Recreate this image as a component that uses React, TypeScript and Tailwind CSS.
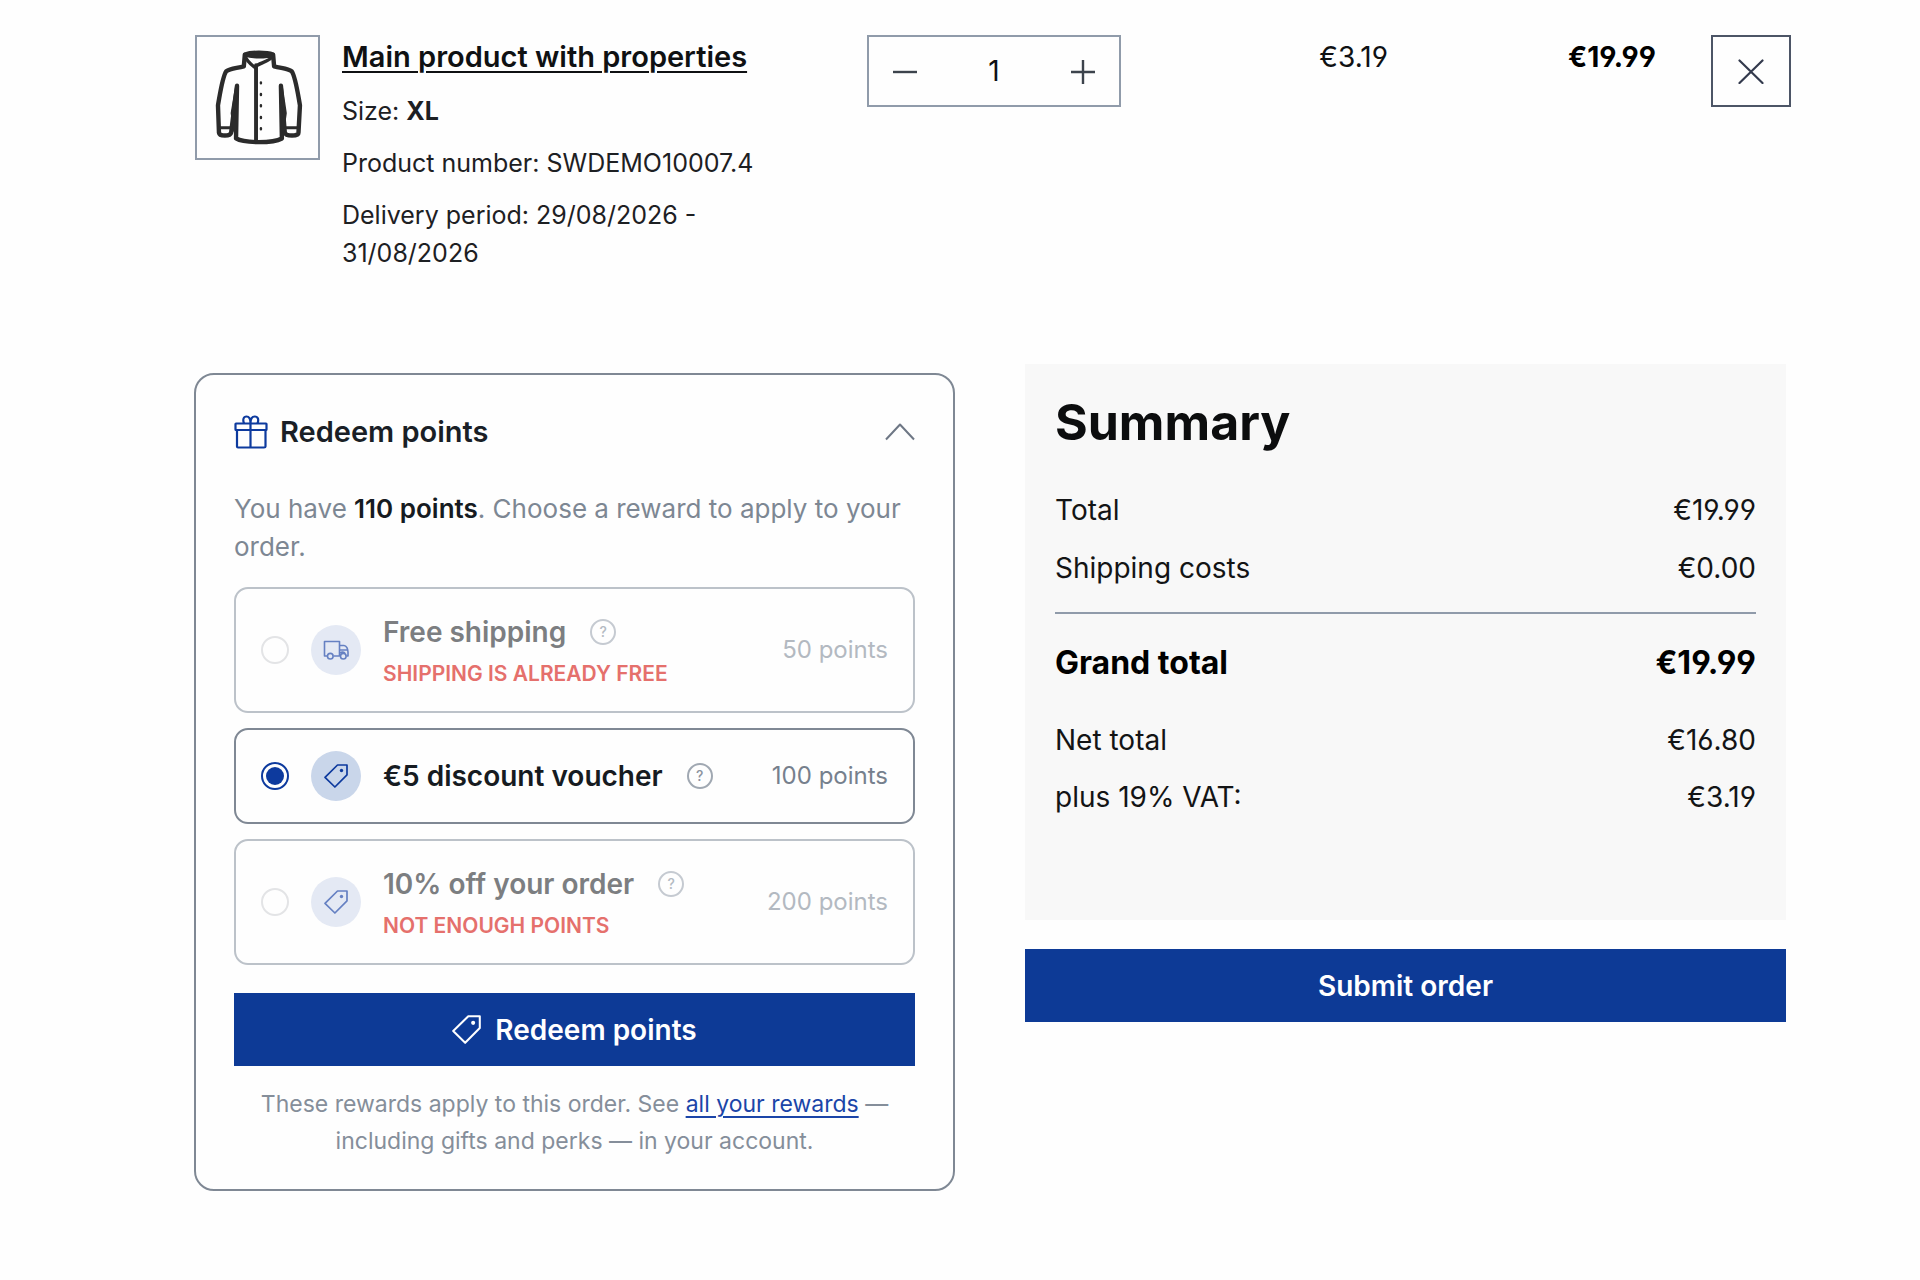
import { useState } from "react";

type Reward = {
  id: string;
  title: string;
  points: number;
  icon: "truck" | "tag";
  note?: string;
};

const REWARDS: Reward[] = [
  { id: "shipping", title: "Free shipping", points: 50, icon: "truck", note: "Shipping is already free" },
  { id: "voucher", title: "€5 discount voucher", points: 100, icon: "tag" },
  { id: "percent", title: "10% off your order", points: 200, icon: "tag", note: "Not enough points" },
];

function ShirtIcon() {
  return (
    <svg viewBox="0 0 124 124" className="size-full" fill="none" stroke="#2b2b2b" strokeWidth="4.5" strokeLinejoin="round" strokeLinecap="round" aria-hidden="true">
      <path d="M49 18 C56 15.500 71 15.500 78 18 L79 30 C86 32 93 32 97 35 C101 41 103 56 105.500 70 L104 98 C104 102 91 102 90 98 L86 50 L87 104 C78 109 48 109 40 104 L41 50 L35 98 C34 102 23 102 22.500 98 L21.500 70 C24 56 26 41 30 35 C34 32 41 32 48 30 Z" />
      <path d="M49 18 C56 21 71 21 78 18 M49 19 C51 25 55 28 59 31 C62 27 76 25 78 19" strokeWidth="3.500" />
      <path d="M60.500 29 V106" strokeWidth="4" />
      <path d="M23 93 H35 M91 93 H104" strokeWidth="3" />
      <path d="M41 51 L36.500 78 L39 96 M86 51 L90 78 L87.500 96" strokeWidth="4" />
      <path d="M65.500 46.500 V47.500 M65.500 58.500 V59.500 M65.500 70 V71 M65.500 82 V83 M65.500 93.500 V94.500" strokeWidth="2.500" />
    </svg>
  );
}

function GiftIcon() {
  return (
    <svg viewBox="0 0 34 34" className="size-[34px]" fill="none" stroke="#0d3a9e" strokeWidth="2.200" strokeLinejoin="round" aria-hidden="true">
      <rect x="1.500" y="8.500" width="31" height="6.500" rx="0.500" />
      <path d="M3 15 V31.500 Q3 32.500 4 32.500 H30 Q31.500 32.500 31.500 31.500 V15 M16.500 8.500 V32.500" />
      <path d="M10 8.500 C8.500 4.500 9.500 1.500 12.500 1.500 C15.500 1.500 16.500 4 16.500 8.500 M23.500 8.500 C25 4.500 24 1.500 20.800 1.500 C17.500 1.500 16.500 4 16.500 8.500" />
    </svg>
  );
}

function TagIcon({ className }: { className: string }) {
  return (
    <svg viewBox="0 0 24 24" className={className} fill="none" stroke="currentColor" strokeWidth="1.700" strokeLinejoin="round" aria-hidden="true">
      <path d="M13.500 1 H23 V10.800 L10.900 23 L1 13.300 Z" />
      <circle cx="17.500" cy="6.500" r="1.700" fill="currentColor" stroke="none" />
    </svg>
  );
}

function TruckIcon() {
  return (
    <svg viewBox="0 0 26 26" className="size-[26px]" fill="none" stroke="currentColor" strokeWidth="1.600" strokeLinejoin="round" aria-hidden="true">
      <path d="M4 19 H1.500 V4.500 H16.500 V19 H10.500" />
      <path d="M16.500 8.500 H21 C23.500 8.500 25 12 25 15 V19 H23.500 M17 13 H24.500 M17 16 C19 14.500 21 15 22 16.500" />
      <circle cx="7.300" cy="19.200" r="2.800" />
      <circle cx="20.300" cy="19.200" r="2.800" />
    </svg>
  );
}

function RewardOption({ reward, checked, onSelect }: { reward: Reward; checked: boolean; onSelect: () => void }) {
  const disabled = Boolean(reward.note);
  return (
    <div
      className={`flex items-center rounded-[14px] border-2 px-[25px] ${
        disabled ? "h-[126px] border-[#bcc2c9]" : "h-24 border-[#7f8894]"
      }`}
    >
      <input
        type="radio"
        id={reward.id}
        name="reward"
        checked={checked}
        disabled={disabled}
        onChange={onSelect}
        className="grid size-7 shrink-0 appearance-none place-items-center rounded-full border-2 border-[#0d3a9e] before:size-[18px] before:rounded-full checked:before:bg-[#0d3a9e] disabled:border-[#e3e4e6]"
      />
      <span
        className={`ml-[22px] grid size-[50px] shrink-0 place-items-center rounded-full ${
          disabled ? "bg-[#e4e9f4] text-[#6580c2]" : "bg-[#c9d6ea] text-[#0d3a9e]"
        }`}
      >
        {reward.icon === "truck" ? <TruckIcon /> : <TagIcon className="size-6" />}
      </span>
      <div className="ml-[22px] flex-1">
        <div className="flex items-center gap-6">
          <label htmlFor={reward.id} className={`text-[28px] leading-9 font-semibold ${disabled ? "text-[#7c7e81]" : "text-[#161b21]"}`}>
            {reward.title}
          </label>
          <button
            type="button"
            aria-label={`About ${reward.title}`}
            className={`grid size-[26px] place-items-center rounded-full border-2 text-[14px] leading-none font-medium ${
              disabled ? "border-[#c5cad1] text-[#b4bac2]" : "border-[#a0a8b2] text-[#8b939e]"
            }`}
          >
            ?
          </button>
        </div>
        {reward.note && <p className="mt-3 text-[21px] leading-6 font-semibold text-[#e5706c] uppercase">{reward.note}</p>}
      </div>
      <span className={`text-[24px] leading-9 ${disabled ? "text-[#b3b9c1]" : "text-[#76808d]"}`}>{reward.points} points</span>
    </div>
  );
}

function CartItem() {
  const [quantity, setQuantity] = useState(1);
  return (
    <section className="grid grid-cols-[672fr_254fr_267fr_268fr_135fr] items-start pl-px text-[28px] leading-[42px] text-[#0f1113]">
      <div className="flex gap-[22px]">
        <div className="size-[125px] shrink-0 border-2 border-[#909baa]">
          <ShirtIcon />
        </div>
        <div className="max-w-[420px] pt-px text-[25px] leading-[38px] text-[#1d2023]">
          <a href="#product" className="text-[29px] leading-[42px] font-semibold text-[#0f1113] underline decoration-2 underline-offset-4">
            Main product with properties
          </a>
          <p className="mt-[14px]">
            Size: <strong className="font-bold">XL</strong>
          </p>
          <p className="mt-[14px]">Product number: SWDEMO10007.4</p>
          <p className="mt-[14px]">Delivery period: 29/08/2026 - 31/08/2026</p>
        </div>
      </div>
      <div className="flex h-[72px] items-center border-2 border-[#909baa]">
        <button type="button" aria-label="Decrease quantity" onClick={() => setQuantity(Math.max(1, quantity - 1))} className="grid h-full w-[72px] shrink-0 place-items-center">
          <svg viewBox="0 0 26 26" className="size-[26px]" stroke="#3c434c" strokeWidth="2.400" aria-hidden="true">
            <path d="M1 14 H25" />
          </svg>
        </button>
        <input aria-label="Quantity" value={quantity} onChange={(e) => setQuantity(Number(e.target.value) || 1)} className="w-0 min-w-0 flex-1 text-center outline-none" />
        <button type="button" aria-label="Increase quantity" onClick={() => setQuantity(quantity + 1)} className="grid h-full w-[72px] shrink-0 place-items-center">
          <svg viewBox="0 0 26 26" className="size-[26px]" stroke="#3c434c" strokeWidth="2.400" aria-hidden="true">
            <path d="M1 14 H25 M13 2 V26" />
          </svg>
        </button>
      </div>
      <p className="pt-px text-right [font-feature-settings:'cv03','cv04']">€3.19</p>
      <p className="pt-px text-right font-bold text-black [font-feature-settings:'cv03','cv04']">€19.99</p>
      <button type="button" aria-label="Remove product" className="grid h-[72px] w-20 place-items-center justify-self-end border-2 border-[#4c5566]">
        <svg viewBox="0 0 26 26" className="size-[26px]" stroke="#333a4d" strokeWidth="2.200" strokeLinecap="round" aria-hidden="true">
          <path d="M1.500 2.500 L24.500 25 M24.500 2.500 L1.500 25" />
        </svg>
      </button>
    </section>
  );
}

function RedeemCard() {
  const [selected, setSelected] = useState("voucher");
  return (
    <section className="mt-[9px] rounded-[20px] border-2 border-[#7f8894] px-[38px] pb-[29px]">
      <button type="button" aria-expanded="true" className="mt-[37px] flex h-10 w-full items-center gap-3">
        <GiftIcon />
        <span className="flex-1 text-left text-[29px] leading-10 font-semibold text-[#1a1f26]">Redeem points</span>
        <svg viewBox="0 0 30 18" className="h-[18px] w-[30px]" fill="none" stroke="#6e7785" strokeWidth="2" strokeLinejoin="round" aria-hidden="true">
          <path d="M1 16.500 L15 1.500 L29 16.500" />
        </svg>
      </button>
      <p className="mt-[38px] text-[26px] leading-[38px] text-[#7d8793]">
        You have <strong className="font-semibold text-[#161b21]">110 points</strong>. Choose a reward to apply to your order.
      </p>
      <div className="mt-[21px] flex flex-col gap-[15px]">
        {REWARDS.map((reward) => (
          <RewardOption key={reward.id} reward={reward} checked={selected === reward.id} onSelect={() => setSelected(reward.id)} />
        ))}
      </div>
      <button type="button" className="mt-7 flex h-[73px] w-full items-center justify-center gap-[14px] bg-[#0d3a96] text-[28px] font-semibold text-white">
        <TagIcon className="size-[29px]" />
        Redeem points
      </button>
      <p className="mt-5 text-center text-[23px] leading-[37px] text-[#858e9a]">
        These rewards apply to this order. See{" "}
        <a href="#rewards" className="text-[#1b45a8] underline decoration-2 underline-offset-4">
          all your rewards
        </a>{" "}
        — including gifts and perks — in your account.
      </p>
    </section>
  );
}

function SummaryRow({ label, value }: { label: string; value: string }) {
  return (
    <div className="flex items-center justify-between">
      <dt>{label}</dt>
      <dd className="[font-feature-settings:'cv03','cv04']">{value}</dd>
    </div>
  );
}

function Summary() {
  return (
    <section>
      <div className="bg-[#f8f8f8] px-[30px] pt-[27px] pb-[102px]">
        <h2 className="text-[50px] leading-[62px] font-bold text-[#0c0d0e]">Summary</h2>
        <dl className="text-[28px] leading-[42px] text-[#131415]">
          <div className="mt-9 flex flex-col gap-4">
            <SummaryRow label="Total" value="€19.99" />
            <SummaryRow label="Shipping costs" value="€0.00" />
          </div>
          <div className="mt-[23px] border-t-2 border-[#909baa] pt-[26px] text-[32px] leading-[46px] font-bold text-black">
            <SummaryRow label="Grand total" value="€19.99" />
          </div>
          <div className="mt-[33px] flex flex-col gap-[15px]">
            <SummaryRow label="Net total" value="€16.80" />
            <SummaryRow label="plus 19% VAT:" value="€3.19" />
          </div>
        </dl>
      </div>
      <button type="button" className="mt-[29px] h-[73px] w-full bg-[#0d3a96] text-[28px] font-semibold text-white">
        Submit order
      </button>
    </section>
  );
}

export default function App() {
  return (
    <main className="min-h-screen bg-[#fefefe] pt-[35px] pr-[129px] pb-20 pl-[194px] font-['Inter',sans-serif]">
      <CartItem />
      <div className="mt-[92px] grid grid-cols-2 items-start gap-[70px] pr-[5px]">
        <RedeemCard />
        <Summary />
      </div>
    </main>
  );
}
